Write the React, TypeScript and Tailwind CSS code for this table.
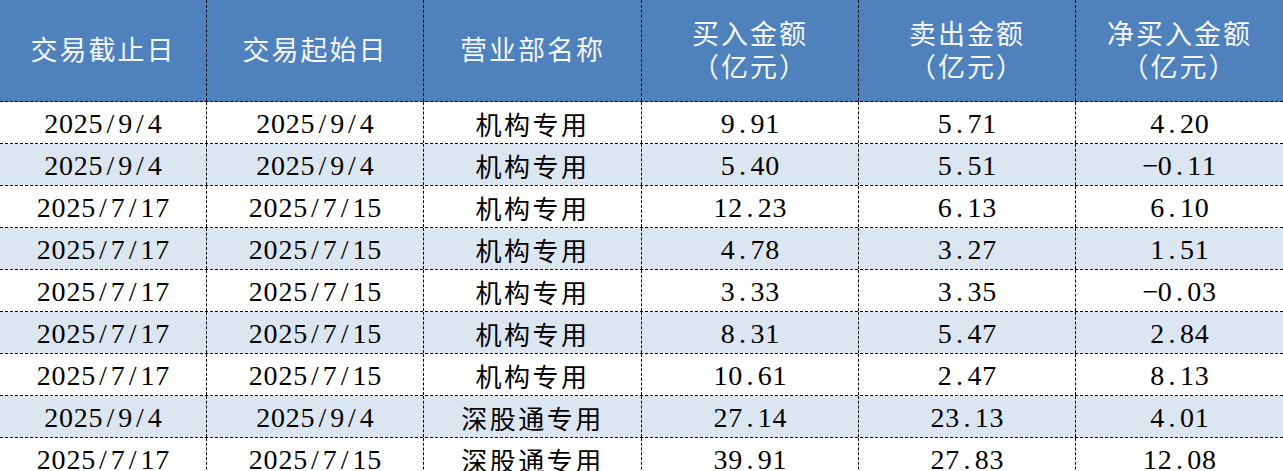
type Row = [string, string, string, string, string, string];

const rows: Row[] = [
  ["2025/9/4", "2025/9/4", "机构专用", "9.91", "5.71", "4.20"],
  ["2025/9/4", "2025/9/4", "机构专用", "5.40", "5.51", "-0.11"],
  ["2025/7/17", "2025/7/15", "机构专用", "12.23", "6.13", "6.10"],
  ["2025/7/17", "2025/7/15", "机构专用", "4.78", "3.27", "1.51"],
  ["2025/7/17", "2025/7/15", "机构专用", "3.33", "3.35", "-0.03"],
  ["2025/7/17", "2025/7/15", "机构专用", "8.31", "5.47", "2.84"],
  ["2025/7/17", "2025/7/15", "机构专用", "10.61", "2.47", "8.13"],
  ["2025/9/4", "2025/9/4", "深股通专用", "27.14", "23.13", "4.01"],
  ["2025/7/17", "2025/7/15", "深股通专用", "39.91", "27.83", "12.08"],
];

const headers: string[][] = [
  ["交易截止日"],
  ["交易起始日"],
  ["营业部名称"],
  ["买入金额", "（亿元）"],
  ["卖出金额", "（亿元）"],
  ["净买入金额", "（亿元）"],
];

const cols = "grid grid-cols-[207px_217px_218px_217px_217px_1fr]";

// half-width chars sit in fixed cells, like the old SimSun table
const Mono: React.FC<{ text: string }> = ({ text }) => (
  <span className="inline-flex">
    {text.split("").map((ch, i) =>
      /[\x00-\x7f]/.test(ch) ? (
        <span
          key={i}
          className="inline-block w-[14.8px] text-center font-['Liberation_Serif',serif] text-[28px]"
        >
          {ch === "-" ? "−" : ch}
        </span>
      ) : (
        <span
          key={i}
          className="inline-block font-['Noto_Sans_CJK_SC',sans-serif] text-[26px] tracking-[2.5px]"
        >
          {ch}
        </span>
      )
    )}
  </span>
);

const App: React.FC = () => {
  return (
    <div className="w-[1283px] h-[471px] overflow-hidden bg-white">
      {/* header */}
      <div className={`${cols} h-[102px] bg-[#4f81bd] border-b border-dashed border-black`}>
        {headers.map((lines, i) => (
          <div
            key={i}
            className={`flex flex-col items-center justify-center text-[#f4f7fb] font-['Noto_Sans_CJK_SC',sans-serif] text-[27px] tracking-[2px] ${
              i < 5 ? "border-r border-dashed border-black" : ""
            } ${lines.length > 1 ? "pb-[3px]" : "pb-[4px]"}`}
          >
            {lines.map((l) => (
              <span key={l} className="block h-[33px] leading-[33px]">
                {l}
              </span>
            ))}
          </div>
        ))}
      </div>

      {/* body */}
      {rows.map((r, ri) => (
        <div
          key={ri}
          className={`${cols} h-[42px] border-b border-dashed border-black ${
            ri % 2 === 1 ? "bg-[#dce6f1]" : "bg-white"
          }`}
        >
          {r.map((c, ci) => (
            <div
              key={ci}
              className={`flex items-center justify-center text-black leading-none pt-[2px] ${
                ci < 5 ? "border-r border-dashed border-black" : ""
              }`}
            >
              <Mono text={c} />
            </div>
          ))}
        </div>
      ))}
    </div>
  );
};

export default App;
